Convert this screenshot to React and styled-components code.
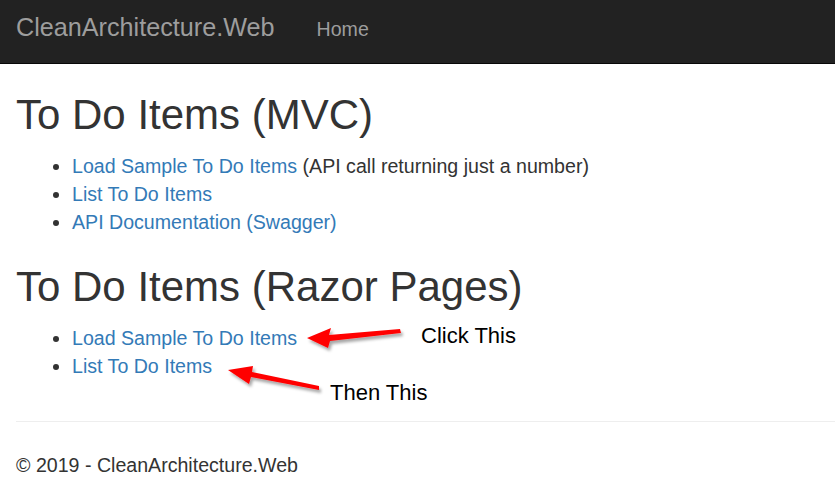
import React from "react";
import styled, { createGlobalStyle } from "styled-components";

const GlobalStyle = createGlobalStyle`
  html, body {
    margin: 0;
    padding: 0;
    background: #fff;
  }
  body {
    font-family: "Liberation Sans", Arial, Helvetica, sans-serif;
    font-size: 19.6px;
    line-height: 28px;
    color: #333;
  }
`;

const Page = styled.div`
  position: relative;
  width: 835px;
  height: 497px;
  overflow: hidden;
`;

const Navbar = styled.nav`
  height: 64px;
  box-sizing: border-box;
  background-color: #222;
  border-bottom: 1px solid #080808;
  display: flex;
  align-items: baseline;
  padding: 15px 0 0 16px;
`;

const Brand = styled.a`
  font-size: 25.2px;
  line-height: 25px;
  color: #9d9d9d;
  text-decoration: none;
`;

const NavLink = styled.a`
  margin-left: 42px;
  font-size: 19.6px;
  line-height: 25px;
  color: #9d9d9d;
  text-decoration: none;
`;

const Main = styled.main`
  padding: 0 16px;
`;

const Heading = styled.h2`
  margin: ${(p) => (p.$first ? "28px" : "28px")} 0 14px;
  font-size: 42px;
  line-height: 46px;
  font-weight: 500;
  color: #333;
`;

const List = styled.ul`
  margin: 0 0 14px;
  padding-left: 56px;
`;

const Link = styled.a`
  color: #337ab7;
  text-decoration: none;
`;

const Rule = styled.hr`
  margin: 41px -16px 29px 0;
  border: 0;
  border-top: 1px solid #eee;
`;

const Footer = styled.footer`
  p {
    margin: 0 0 14px;
  }
`;

const Overlay = styled.svg`
  position: absolute;
  left: 0;
  top: 0;
  pointer-events: none;
`;

const Note = styled.span`
  position: absolute;
  left: ${(p) => p.$x}px;
  top: ${(p) => p.$y}px;
  font-family: "Liberation Sans", Arial, sans-serif;
  font-size: 22px;
  line-height: 22px;
  color: #000;
`;

const Arrows = () => (
  <Overlay width="835" height="497" viewBox="0 0 835 497">
    <defs>
      <filter id="shade" x="-20%" y="-50%" width="140%" height="200%">
        <feDropShadow dx="2" dy="3" stdDeviation="1.6" floodColor="#000" floodOpacity="0.35" />
      </filter>
    </defs>
    <polygon
      points="307,338 331,328 329,335 400,329 401,333 330,341 328,348"
      fill="#f00"
      filter="url(#shade)"
    />
    <polygon
      points="228,370 253,366 252,372 319,386 319,390 251,377 249,384"
      fill="#f00"
      filter="url(#shade)"
    />
  </Overlay>
);

export default function App() {
  return (
    <Page>
      <GlobalStyle />
      <Navbar>
        <Brand href="#">CleanArchitecture.Web</Brand>
        <NavLink href="#">Home</NavLink>
      </Navbar>
      <Main>
        <Heading $first>To Do Items (MVC)</Heading>
        <List>
          <li>
            <Link href="#">Load Sample To Do Items</Link> (API call returning just a number)
          </li>
          <li>
            <Link href="#">List To Do Items</Link>
          </li>
          <li>
            <Link href="#">API Documentation (Swagger)</Link>
          </li>
        </List>
        <Heading>To Do Items (Razor Pages)</Heading>
        <List>
          <li>
            <Link href="#">Load Sample To Do Items</Link>
          </li>
          <li>
            <Link href="#">List To Do Items</Link>
          </li>
        </List>
        <Rule />
        <Footer>
          <p>© 2019 - CleanArchitecture.Web</p>
        </Footer>
      </Main>
      <Arrows />
      <Note $x={421} $y={325}>Click This</Note>
      <Note $x={330} $y={382}>Then This</Note>
    </Page>
  );
}
